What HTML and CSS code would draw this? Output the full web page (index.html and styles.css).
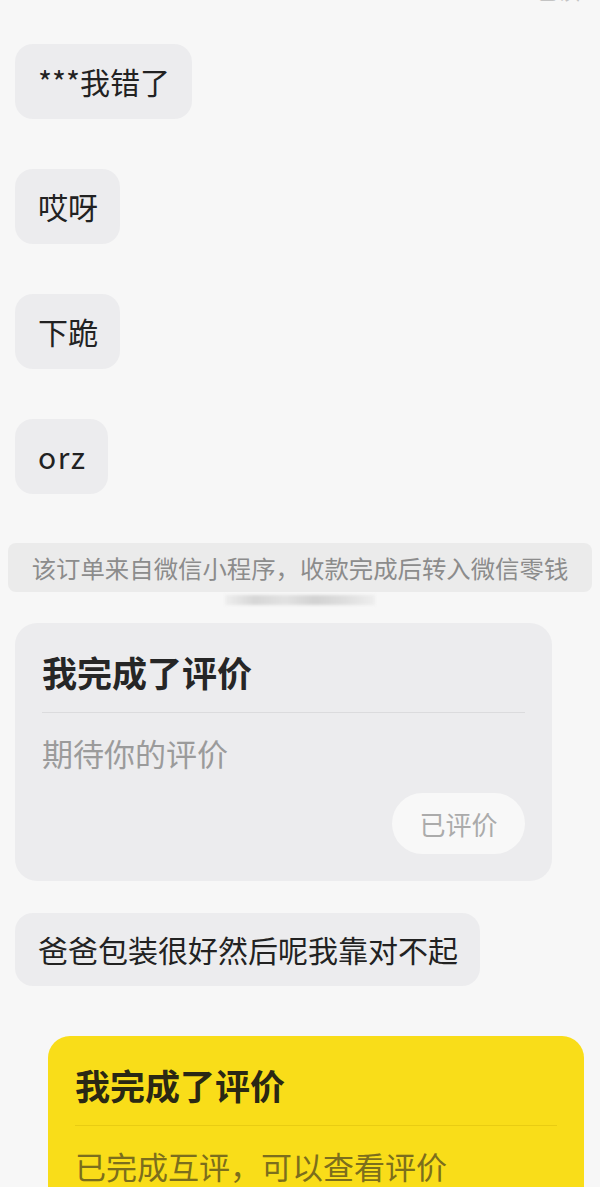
FILE: index.html
```html
<!DOCTYPE html>
<html lang="zh-CN">
<head>
    <meta charset="UTF-8">
    <meta name="viewport" content="width=device-width, initial-scale=1.0">
    <title>聊天</title>
    <link rel="stylesheet" href="styles.css">
</head>
<body>

    <div class="chat">
        <!-- read receipt, mostly scrolled out of view -->
        <div class="top-status"><span>已读</span></div>

        <div class="bubble first">***我错了</div>
        <div class="bubble">哎呀</div>
        <div class="bubble">下跪</div>
        <div class="bubble latin">orz</div>

        <div class="notice">该订单来自微信小程序，收款完成后转入微信零钱</div>
        <div class="smudge"></div>

        <!-- review card from the other side -->
        <div class="card">
            <div class="card-title">我完成了评价</div>
            <div class="card-line"></div>
            <div class="card-sub">期待你的评价</div>
            <div class="card-actions">
                <span class="card-btn">已评价</span>
            </div>
        </div>

        <div class="bubble after-card">爸爸包装很好然后呢我靠对不起</div>

        <!-- my own review card -->
        <div class="card mine">
            <div class="card-title">我完成了评价</div>
            <div class="card-line"></div>
            <div class="card-sub">已完成互评，可以查看评价</div>
        </div>
    </div>

</body>
</html>
```

FILE: styles.css
```css
* {
    margin: 0;
    padding: 0;
    box-sizing: border-box;
    font-family: "Noto Sans CJK SC", "Noto Sans", sans-serif;
}

body {
    background: #f7f7f7;
    width: 600px;
    overflow: hidden;
}

.chat {
    display: flex;
    flex-direction: column;
    align-items: flex-start;
    padding: 0 16px 0 15px;
}

.top-status {
    align-self: flex-end;
    height: 4px;
    overflow: hidden;
    margin-right: 4px;
}

.top-status span {
    display: block;
    margin-top: -26px;
    font-size: 22px;
    line-height: 30px;
    color: #c4c4c4;
}

.bubble {
    background: #ececee;
    color: #222;
    font-size: 30px;
    line-height: 35px;
    padding: 20px 22px 20px 23px;
    border-radius: 18px;
    margin-top: 50px;
}

.bubble.first {
    margin-top: 40px;
}

.bubble.latin {
    letter-spacing: 1.5px;
}

.bubble.after-card {
    margin-top: 32px;
    padding-top: 19px;
    padding-bottom: 19px;
}

.notice {
    align-self: stretch;
    margin: 49px -8px 0 -7px;
    height: 49px;
    background: #ebebeb;
    border-radius: 8px;
    color: #8c8c8c;
    font-size: 24.4px;
    line-height: 49px;
    text-align: center;
}

.smudge {
    align-self: center;
    width: 150px;
    height: 10px;
    margin-top: 3px;
    background: linear-gradient(90deg, #eeeeee, #d6d6d6 20%, #e2e2e2 40%, #d2d2d2 60%, #dedede 80%, #eeeeee);
    filter: blur(1.5px);
}

.card {
    width: 537px;
    margin-top: 18px;
    background: #ececee;
    border-radius: 22px;
    padding: 29px 27px 27px;
}

.card-title {
    font-size: 35px;
    line-height: 40px;
    font-weight: bold;
    color: #262626;
}

.card-line {
    height: 1px;
    background: #dbdbdd;
    margin: 20px 0 21px;
}

.card-sub {
    font-size: 31px;
    line-height: 38px;
    color: #9b9b9b;
}

.card-actions {
    display: flex;
    justify-content: flex-end;
    margin-top: 21px;
}

.card-btn {
    width: 133px;
    height: 61px;
    border-radius: 31px;
    background: #f8f8f8;
    color: #ababab;
    font-size: 26px;
    line-height: 61px;
    text-align: center;
}

.card.mine {
    align-self: flex-end;
    width: 536px;
    margin-top: 50px;
    background: #f9dd19;
    padding-bottom: 40px;
}

.card.mine .card-title {
    color: #2a2814;
}

.card.mine .card-line {
    background: #e9cc12;
}

.card.mine .card-sub {
    color: #7c6e1c;
    margin-top: 3px;
}
```
